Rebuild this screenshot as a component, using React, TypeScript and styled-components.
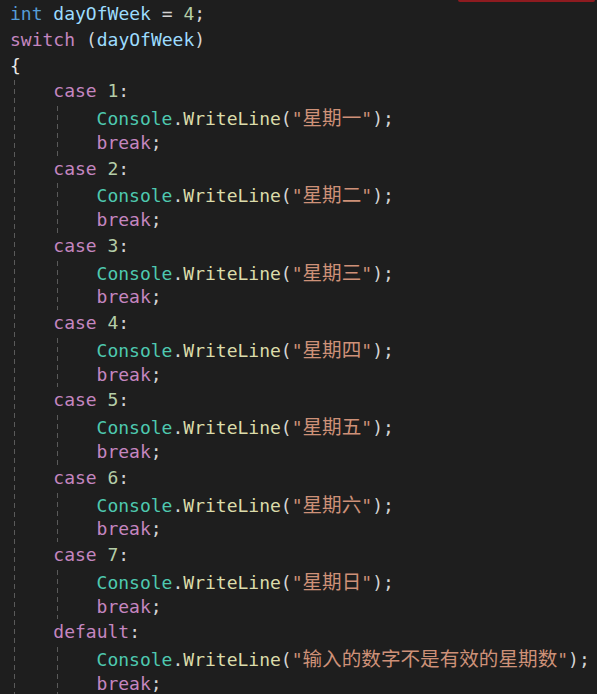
import React from 'react';
import styled, { createGlobalStyle } from 'styled-components';

const Global = createGlobalStyle`
  html, body { margin: 0; padding: 0; background: #1e1e1e; }
`;

const Editor = styled.div`
  position: relative;
  width: 597px;
  height: 694px;
  overflow: hidden;
  box-sizing: border-box;
  padding: 1px 0 0 10px;
  background: #1e1e1e;
  font-family: "DejaVu Sans Mono", "Noto Sans CJK SC", monospace;
  font-size: 18px;
  color: #d4d4d4;
`;

const TabMarker = styled.div`
  position: absolute;
  top: 0;
  left: 458px;
  width: 137px;
  height: 2px;
  background: #8e1b20;
  border-radius: 0 0 2px 2px;
`;

const Line = styled.div`
  height: 25.77px;
  line-height: 25.77px;
  white-space: pre;
`;

const Block = styled.div`
  padding-left: 43.3px;
  background-image: repeating-linear-gradient(
    to bottom,
    #5a5a5a 0px,
    #5a5a5a 5px,
    transparent 5px,
    transparent 9px
  );
  background-size: 1px 100%;
  background-repeat: no-repeat;
  background-position: 4px 2px;
`;

type Kind = 'type' | 'var' | 'num' | 'kw' | 'cls' | 'fn' | 'str' | 'punc' | 'brace';

const colors: Record<Kind, string> = {
  type: '#569cd6',
  var: '#9cdcfe',
  num: '#b5cea8',
  kw: '#c586c0',
  cls: '#4ec9b0',
  fn: '#dcdcaa',
  str: '#ce9178',
  punc: '#d4d4d4',
  brace: '#e8e8e8',
};

const Tok = styled.span<{ $k: Kind }>`
  color: ${(p) => colors[p.$k]};
`;

const Cjk = styled.span`
  font-family: "Noto Sans CJK SC", sans-serif;
  font-size: 19.6px;
`;

const WriteLine: React.FC<{ text: string }> = ({ text }) => (
  <Line>
    <Tok $k="cls">Console</Tok>
    <Tok $k="punc">.</Tok>
    <Tok $k="fn">WriteLine</Tok>
    <Tok $k="punc">(</Tok>
    <Tok $k="str">
      "<Cjk>{text}</Cjk>"
    </Tok>
    <Tok $k="punc">);</Tok>
  </Line>
);

const Break = () => (
  <Line>
    <Tok $k="kw">break</Tok>
    <Tok $k="punc">;</Tok>
  </Line>
);

const cases = [
  { n: '1', t: '星期一' },
  { n: '2', t: '星期二' },
  { n: '3', t: '星期三' },
  { n: '4', t: '星期四' },
  { n: '5', t: '星期五' },
  { n: '6', t: '星期六' },
  { n: '7', t: '星期日' },
];

export default function App() {
  return (
    <>
      <Global />
      <Editor>
        <TabMarker />
        <Line>
          <Tok $k="type">int</Tok> <Tok $k="var">dayOfWeek</Tok> <Tok $k="punc">=</Tok>{' '}
          <Tok $k="num">4</Tok>
          <Tok $k="punc">;</Tok>
        </Line>
        <Line>
          <Tok $k="kw">switch</Tok> <Tok $k="punc">(</Tok>
          <Tok $k="var">dayOfWeek</Tok>
          <Tok $k="punc">)</Tok>
        </Line>
        <Line>
          <Tok $k="brace">{'{'}</Tok>
        </Line>
        <Block>
          {cases.map((c) => (
            <React.Fragment key={c.n}>
              <Line>
                <Tok $k="kw">case</Tok> <Tok $k="num">{c.n}</Tok>
                <Tok $k="punc">:</Tok>
              </Line>
              <Block>
                <WriteLine text={c.t} />
                <Break />
              </Block>
            </React.Fragment>
          ))}
          <Line>
            <Tok $k="kw">default</Tok>
            <Tok $k="punc">:</Tok>
          </Line>
          <Block>
            <WriteLine text="输入的数字不是有效的星期数" />
            <Break />
          </Block>
        </Block>
      </Editor>
    </>
  );
}
